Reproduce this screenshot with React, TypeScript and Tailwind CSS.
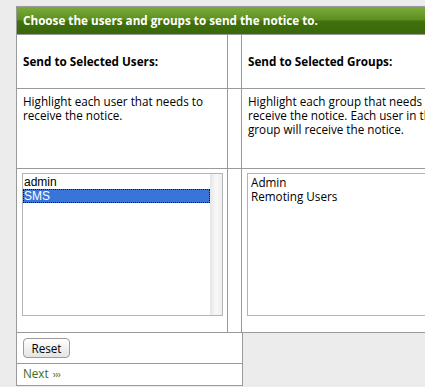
export default function App() {
  const font = { fontFamily: '"Open Sans", "DejaVu Sans", sans-serif' }
  return (
    <div className="min-h-[387px] w-[425px] overflow-hidden bg-[#ececec] pl-4 pt-[6px] text-[11.7px] text-black" style={font}>
      <div className="w-[460px] border border-[#9a9a9a] bg-white">
        <div className="flex h-[27px] items-center bg-[linear-gradient(#7aac3c,#5e9020_46%,#406f0c_54%,#3a680a)] px-[6px] text-[11.7px] font-bold text-white">
          Choose the users and groups to send the notice to.
        </div>
        <div className="flex h-[54px] border-t border-[#9a9a9a]">
          <div className="flex w-[210px] items-center px-[6px] pt-[1px] font-bold">Send to Selected Users:</div>
          <div className="w-[15px] border-x border-[#9a9a9a]" />
          <div className="flex flex-1 items-center px-[6px] pt-[1px] font-bold">Send to Selected Groups:</div>
        </div>
        <div className="flex h-[80px] border-t border-[#9a9a9a] leading-[14px]">
          <div className="w-[210px] px-[6px] pt-[5px]">Highlight each user that needs to receive the notice.</div>
          <div className="w-[15px] border-x border-[#9a9a9a]" />
          <div className="flex-1 whitespace-nowrap px-[6px] pt-[5px]">
            Highlight each group that needs to
            <br />
            receive the notice. Each user in that
            <br />
            group will receive the notice.
          </div>
        </div>
        <div className="flex h-[164px] border-t border-[#9a9a9a]">
          <div className="w-[210px] px-[5px] pt-[4px]">
            <div className="flex h-[143px] w-[201px] border border-[#b4b4b4] bg-white text-[12px]" style={{ fontFamily: '"Liberation Sans", Arial, sans-serif' }}>
              <div className="flex-1 pt-[1px]">
                <div className="h-[14px] pl-[1px] leading-[14px]">admin</div>
                <div className="h-[14px] border border-dotted border-[#0a0a55] bg-[#3a74d8] leading-[12px] text-white">SMS</div>
              </div>
              <div className="w-[12px] bg-[linear-gradient(90deg,#e6e6e6,#f8f8f8_50%,#eeeeee)]" />
            </div>
          </div>
          <div className="w-[15px] border-x border-[#9a9a9a]" />
          <div className="flex-1 px-[5px] pt-[4px]">
            <div className="h-[143px] border border-[#b4b4b4] bg-white pl-[3px] pt-[1px] leading-[14px]">
              <div>Admin</div>
              <div>Remoting Users</div>
            </div>
          </div>
        </div>
      </div>
      <div className="w-[227px] border-x border-b border-[#9a9a9a] bg-white">
        <div className="flex h-[30px] items-center px-[6px]">
          <button className="h-[20px] w-[47px] rounded-[4px] border border-[#9c9c9c] bg-[linear-gradient(#ffffff,#e4e4e4)] text-[11.7px] leading-[18px] text-black shadow-[0_1px_0_#ffffff]">
            Reset
          </button>
        </div>
        <div className="flex h-[22px] items-center border-t border-[#9a9a9a] px-[6px] pb-[1px] text-[#3d6a12]">
          Next <span className="ml-[4px] text-[10px] tracking-[-0.5px]">›››</span>
        </div>
      </div>
    </div>
  )
}
